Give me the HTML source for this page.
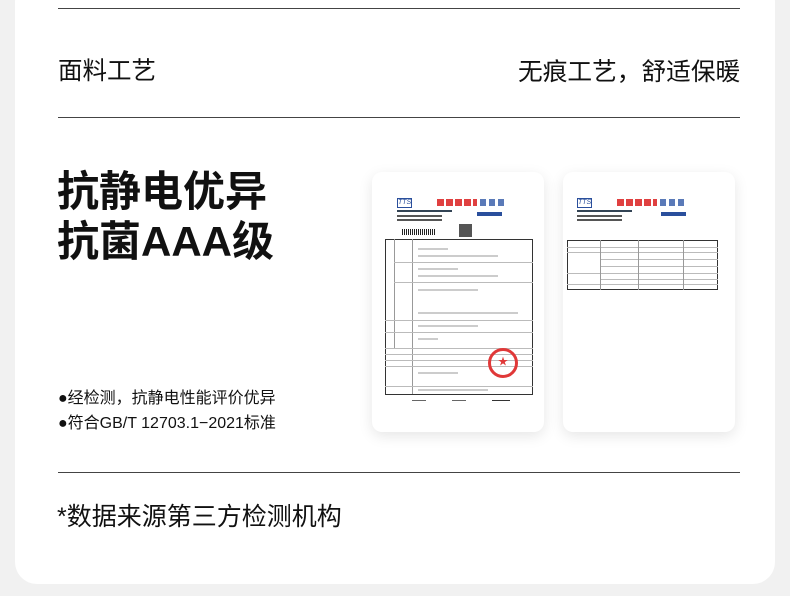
<!DOCTYPE html>
<html><head><meta charset="utf-8"><style>
*{margin:0;padding:0;box-sizing:border-box}
body{width:790px;height:596px;background:#f1f1f1;position:relative;overflow:hidden;font-family:"Liberation Sans","Noto Sans CJK SC",sans-serif;color:#111}
.card{position:absolute;left:15px;top:-20px;width:760px;height:604px;background:#fff;border-radius:22px}
.line{position:absolute;left:58px;width:682px;height:1px;background:#444}
.t{position:absolute;white-space:nowrap}
.doc{position:absolute;top:172px;width:172px;height:260px;background:#fff;border-radius:10px;box-shadow:0 4px 14px rgba(0,0,0,0.10)}
.a{position:absolute}
.g{background:#bbb;height:1px}
.x{position:absolute;height:2px;background:#ccc}
</style></head><body>
<div class="card"></div>
<div class="line" style="top:8px"></div>
<div class="t" style="left:58px;top:52px;font-size:24.5px">面料工艺</div>
<div class="t" style="left:518px;top:52px;font-size:24.7px">无痕工艺，舒适保暖</div>
<div class="line" style="top:117px"></div>
<div class="t" style="left:57px;top:167px;font-size:42px;font-weight:bold;line-height:50px">抗静电优异<br>抗菌AAA级</div>
<div class="t" style="left:58px;top:386px;font-size:16px;line-height:25px">●经检测，抗静电性能评价优异<br>●符合GB/T 12703.1−2021标准</div>

<div class="doc" style="left:372px">
 <div class="a" style="left:25px;top:26px;width:15px;height:10px;border:1px solid #2a4f9c;font-size:7px;color:#2a4f9c;font-style:italic;line-height:8px;text-align:center">TTS</div>
 <div class="a" style="left:65px;top:27px;width:40px;height:7px;background:repeating-linear-gradient(90deg,#e04040 0 7px,#fff 7px 9px)"></div>
 <div class="a" style="left:108px;top:27px;width:24px;height:7px;background:repeating-linear-gradient(90deg,#5a7ab8 0 6px,#fff 6px 9px)"></div>
 <div class="a" style="left:25px;top:38px;width:55px;height:2px;background:#345"></div>
 <div class="a" style="left:25px;top:43px;width:45px;height:2px;background:#555"></div>
 <div class="a" style="left:25px;top:47px;width:45px;height:2px;background:#555"></div>
 <div class="a" style="left:105px;top:40px;width:25px;height:4px;background:#2a4f9c"></div>
 <div class="a" style="left:87px;top:52px;width:13px;height:13px;background:#555"></div>
 <div class="a" style="left:30px;top:57px;width:34px;height:6px;background:repeating-linear-gradient(90deg,#222 0 1px,#fff 1px 2px)"></div>
 <div class="a" style="left:13px;top:67px;width:148px;height:156px;border:1px solid #333"></div>
 <div class="a" style="left:22px;top:67px;width:1px;height:110px;background:#999"></div>
 <div class="a" style="left:40px;top:67px;width:1px;height:155px;background:#999"></div>
 <div class="a g" style="left:22px;top:90px;width:139px"></div>
 <div class="a g" style="left:22px;top:110px;width:139px"></div>
 <div class="a g" style="left:13px;top:148px;width:148px"></div>
 <div class="a g" style="left:13px;top:160px;width:148px"></div>
 <div class="a g" style="left:13px;top:176px;width:148px"></div>
 <div class="a g" style="left:13px;top:182px;width:148px"></div>
 <div class="a g" style="left:13px;top:188px;width:148px"></div>
 <div class="a g" style="left:13px;top:194px;width:148px"></div>
 <div class="a g" style="left:13px;top:214px;width:148px"></div>
 <div class="x" style="left:46px;top:76px;width:30px"></div><div class="x" style="left:46px;top:83px;width:80px"></div>
 <div class="x" style="left:46px;top:96px;width:40px"></div><div class="x" style="left:46px;top:103px;width:80px"></div>
 <div class="x" style="left:46px;top:117px;width:60px"></div><div class="x" style="left:46px;top:140px;width:100px"></div>
 <div class="x" style="left:46px;top:153px;width:60px"></div><div class="x" style="left:46px;top:166px;width:20px"></div>
 <div class="x" style="left:46px;top:200px;width:40px"></div><div class="x" style="left:46px;top:217px;width:70px"></div>
 <div class="a" style="left:116px;top:176px;width:30px;height:30px;border:3px solid #e03838;border-radius:50%;color:#e03838;font-size:10px;text-align:center;line-height:24px">★</div>
 <div class="a" style="left:40px;top:224px;width:14px;height:5px;border-bottom:1px solid #666"></div>
 <div class="a" style="left:80px;top:224px;width:14px;height:5px;border-bottom:1px solid #666"></div>
 <div class="a" style="left:120px;top:224px;width:18px;height:5px;border-bottom:1px solid #333"></div>
</div>

<div class="doc" style="left:563px">
 <div class="a" style="left:14px;top:26px;width:15px;height:10px;border:1px solid #2a4f9c;font-size:7px;color:#2a4f9c;font-style:italic;line-height:8px;text-align:center">TTS</div>
 <div class="a" style="left:54px;top:27px;width:40px;height:7px;background:repeating-linear-gradient(90deg,#e04040 0 7px,#fff 7px 9px)"></div>
 <div class="a" style="left:97px;top:27px;width:24px;height:7px;background:repeating-linear-gradient(90deg,#5a7ab8 0 6px,#fff 6px 9px)"></div>
 <div class="a" style="left:14px;top:38px;width:55px;height:2px;background:#345"></div>
 <div class="a" style="left:14px;top:43px;width:45px;height:2px;background:#555"></div>
 <div class="a" style="left:14px;top:47px;width:45px;height:2px;background:#555"></div>
 <div class="a" style="left:98px;top:40px;width:25px;height:4px;background:#2a4f9c"></div>
 <div class="a" style="left:4px;top:68px;width:151px;height:50px;border:1px solid #333"></div>
 <div class="a g" style="left:4px;top:75px;width:151px"></div>
 <div class="a g" style="left:4px;top:80px;width:151px"></div>
 <div class="a g" style="left:37px;top:87px;width:118px"></div>
 <div class="a g" style="left:37px;top:94px;width:118px"></div>
 <div class="a g" style="left:4px;top:101px;width:151px"></div>
 <div class="a g" style="left:37px;top:107px;width:118px"></div>
 <div class="a g" style="left:4px;top:112px;width:151px"></div>
 <div class="a" style="left:37px;top:68px;width:1px;height:50px;background:#999"></div>
 <div class="a" style="left:75px;top:68px;width:1px;height:50px;background:#999"></div>
 <div class="a" style="left:120px;top:68px;width:1px;height:50px;background:#999"></div>
</div>

<div class="line" style="top:472px"></div>
<div class="t" style="left:57px;top:497px;font-size:25px">*数据来源第三方检测机构</div>
</body></html>
